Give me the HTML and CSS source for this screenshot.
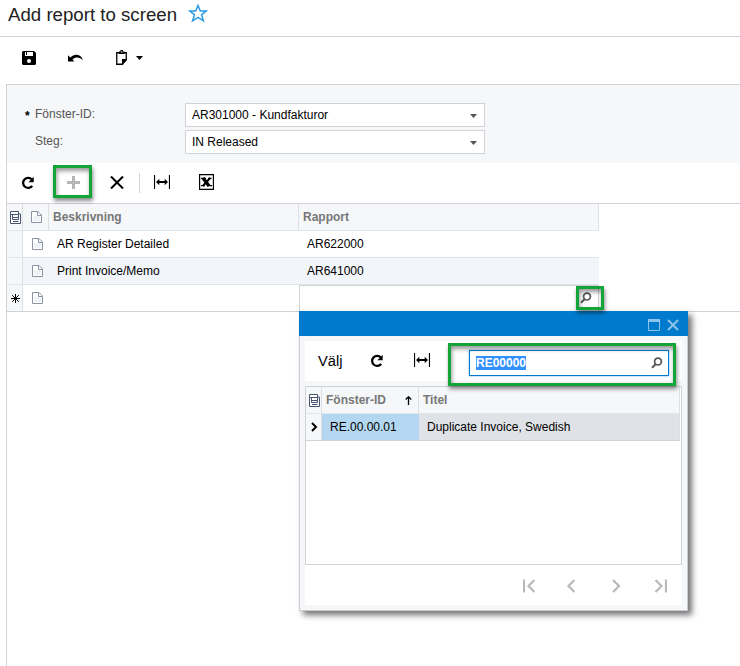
FILE: index.html
```html
<!DOCTYPE html>
<html lang="sv">
<head>
<meta charset="utf-8">
<title>Add report to screen</title>
<link rel="stylesheet" href="styles.css">
</head>
<body>
<svg class="defs" width="0" height="0">
  <defs>
    <symbol id="refresh" viewBox="0 0 14 14"><path d="M10.9 3.6A5 5 0 1 0 11.2 9.800" fill="none" stroke="currentColor" stroke-width="2.200"/><path d="M12.700 .8V6.2H7.4Z" fill="currentColor"/></symbol>
    <symbol id="fit" viewBox="0 0 16 14"><path d="M.5 0V14M15.5 0V14" stroke="currentColor" stroke-width="1.2"/><path d="M4 7H12" stroke="currentColor" stroke-width="2"/><path d="M2 7L5.3 3.7V10.3ZM14 7L10.7 3.7V10.3Z" fill="currentColor"/></symbol>
    <symbol id="file" viewBox="0 0 11 12"><path d="M.5 .5H7L10.500 4V11.500H.5Z" fill="#fff" stroke="#8b93a5"/><path d="M2 5H9V10H2Z" fill="#eff1f5"/><path d="M6.500 .5V4.500H10.500" fill="none" stroke="#8b93a5"/></symbol>
    <symbol id="list" viewBox="0 0 11 13"><path d="M.5 3V12.500H10.500V3Z" fill="#fff" stroke="#46546e"/><path d="M.5 .5H8.500V3.500H.5Z" fill="#fff" stroke="#46546e"/><path d="M2.500 3.500H8.500V6.500H2.500ZM2.500 6.500H8.500V8.500H2.500Z" fill="#fff" stroke="#46546e"/><path d="M3 10.500H8.500" stroke="#46546e"/></symbol>
    <symbol id="search" viewBox="0 0 12 12"><circle cx="7" cy="4.600" r="3.400" fill="none" stroke="#555" stroke-width="1.700"/><path d="M4.500 7.200L1 10.700" stroke="#555" stroke-width="2"/></symbol>
  </defs>
</svg>

<header class="title"><h1>Add report to screen</h1>
  <svg class="star" width="20" height="19" viewBox="0 0 20 19"><path d="M10 1.500L12.300 7H18.200L13.500 10.800L15.400 16.800L10 13.300L4.600 16.800L6.500 10.800L1.800 7H7.700Z" fill="#fff" stroke="#2b9be6" stroke-width="1.500"/></svg>
</header>

<nav class="actions">
  <svg class="save" width="14" height="14" viewBox="0 0 14 14"><path d="M1 0H12L14 2V13L13 14H1L0 13V1Z"/><path d="M3 1H11V5H3Z" fill="#fff"/><path d="M4 0H5V4H4Z"/><circle cx="7" cy="10" r="2" fill="#fff"/></svg>
  <svg class="undo" width="16" height="9" viewBox="0 0 16 9"><path d="M0 1.300V7.500H6.300L4.500 5.300C8 2.700 12 3 14.800 6.200C14 1 7 -1.500 2.400 3.400Z"/></svg>
  <svg class="paste" width="12" height="15" viewBox="0 0 12 15"><path d="M.75 2.750H10.250V9.500L6.500 13.250V14.250H.75Z" fill="#fff" stroke="#000" stroke-width="1.300"/><path d="M3 1.500H4.500V0H7V1.500H8.500V4H3Z"/><path d="M5 1.500H6.500V2.500H5Z" fill="#fff"/><path d="M6 9H11V10L7 14.500H6Z"/></svg>
  <span class="caret black"></span>
</nav>

<main class="page">
  <form class="filters">
    <label class="required">Fönster-ID:</label><div class="select"><span>AR301000 - Kundfakturor</span><i class="caret"></i></div>
    <label>Steg:</label><div class="select"><span>IN Released</span><i class="caret"></i></div>
  </form>

  <div class="tools">
    <svg class="t-refresh" width="14" height="14"><use href="#refresh"/></svg>
    <span class="add"><svg width="13" height="13" viewBox="0 0 13 13"><path d="M6.500 0V13M0 6.500H13" stroke="#b5b5b5" stroke-width="3"/></svg></span>
    <svg class="t-delete" width="14" height="13" viewBox="0 0 14 13"><path d="M1 .5L13 12.500M13 .5L1 12.500" stroke="#000" stroke-width="2"/></svg>
    <i class="divider"></i>
    <svg class="t-fit" width="16" height="14"><use href="#fit"/></svg>
    <svg class="t-excel" width="15" height="16" viewBox="0 0 15 16"><path d="M.6 .6H14.400V15.400H.6Z" fill="#fff" stroke="#000" stroke-width="1.200"/><path d="M4 4L10 12" stroke="#000" stroke-width="3.500"/><path d="M11.200 4L3.800 12" stroke="#000" stroke-width="2"/><path d="M2 4.300H7M9 4.300H12.500M2 11.700H6M8 11.700H13" stroke="#000" stroke-width="1.300"/></svg>
  </div>

  <section class="grid">
    <div class="row head"><span class="mark"><svg width="11" height="13"><use href="#list"/></svg></span><span class="doc"><svg width="11" height="12"><use href="#file"/></svg></span><span class="desc">Beskrivning</span><span class="rep">Rapport</span></div>
    <div class="row"><span class="mark"></span><span class="doc"><svg width="11" height="12"><use href="#file"/></svg></span><span class="desc">AR Register Detailed</span><span class="rep">AR622000</span></div>
    <div class="row alt"><span class="mark"></span><span class="doc"><svg width="11" height="12"><use href="#file"/></svg></span><span class="desc">Print Invoice/Memo</span><span class="rep">AR641000</span></div>
    <div class="row new"><span class="mark"><svg width="9" height="9" viewBox="0 0 9 9"><path d="M4.500 0V9M0 4.500H9M1.200 1.200L7.800 7.800M7.800 1.200L1.200 7.800" stroke="#000" stroke-width="1"/></svg></span><span class="doc"><svg width="11" height="12"><use href="#file"/></svg></span><span class="desc"></span><span class="rep editor"><svg width="12" height="12"><use href="#search"/></svg></span></div>
  </section>
</main>

<aside class="dialog">
  <div class="bar">
    <svg width="12" height="12" viewBox="0 0 12 12"><path d="M.5 1V11.500H11.500V1" fill="none" stroke="#8cc4eb"/><path d="M0 1.500H12" stroke="#8cc4eb" stroke-width="3"/></svg>
    <svg width="12" height="12" viewBox="0 0 12 12"><path d="M1 1L11 11M11 1L1 11" stroke="#8cc4eb" stroke-width="2"/></svg>
  </div>
  <div class="body">
    <div class="lookup-tools">
      <span class="pick">Välj</span>
      <svg class="d-refresh" width="14" height="14"><use href="#refresh"/></svg>
      <svg class="d-fit" width="16" height="14"><use href="#fit"/></svg>
      <div class="query"><mark>RE00000</mark><svg width="12" height="12"><use href="#search"/></svg></div>
    </div>
    <div class="results">
      <div class="line names"><span class="c1"><svg width="11" height="13"><use href="#list"/></svg></span><span class="c2">Fönster-ID<svg width="7" height="9" viewBox="0 0 7 9"><path d="M3.500 1V9M.7 3.500L3.500 .8L6.300 3.500" fill="none" stroke="#000" stroke-width="1.300"/></svg></span><span class="c3">Titel</span></div>
      <div class="line picked"><span class="c1"><svg width="7" height="10" viewBox="0 0 7 10"><path d="M1 1L5 5L1 9" fill="none" stroke="#000" stroke-width="2"/></svg></span><span class="c2">RE.00.00.01</span><span class="c3">Duplicate Invoice, Swedish</span></div>
    </div>
    <div class="pager">
      <svg width="13" height="14" viewBox="0 0 13 14"><path d="M1 .5V13.500M11.500 1L5.500 7L11.500 13" /></svg>
      <svg width="13" height="14" viewBox="0 0 13 14"><path d="M8.500 1L2.500 7L8.500 13"/></svg>
      <svg width="13" height="14" viewBox="0 0 13 14"><path d="M3 1L9 7L3 13"/></svg>
      <svg width="13" height="14" viewBox="0 0 13 14"><path d="M12 .5V13.500M1.500 1L7.500 7L1.500 13"/></svg>
    </div>
  </div>
</aside>
<i class="ring ring-add"></i>
<i class="ring ring-lookup"></i>
<i class="ring ring-query"></i>
</body>
</html>
```
FILE: styles.css
```css
* { box-sizing: border-box; }
body { margin: 0; width: 740px; height: 666px; overflow: hidden; display: flex; flex-direction: column; background: #fff; color: #000; font: 12px/14px "Liberation Sans", Arial, sans-serif; }
svg { display: block; flex: none; }
.defs { position: absolute; }
.title { height: 37px; flex: none; display: flex; padding-left: 8px; border-bottom: 1px solid #d0d2d8; }
h1 { margin: 4px 0 0; font-size: 18.67px; line-height: 22px; font-weight: 400; color: #222; white-space: nowrap; }
.star { margin: 4px 0 0 11px; }
.actions { height: 47px; flex: none; display: flex; align-items: flex-start; padding: 14px 0 0 22px; }
.undo { margin: 3px 0 0 32px; }
.paste { margin: -1px 0 0 32px; }
.caret { width: 7px; height: 4px; flex: none; background: #555; clip-path: polygon(0 0, 100% 0, 50% 100%); }
.caret.black { background: #000; margin: 5px 0 0 8px; }

.page { flex: 1; margin-left: 6px; border: solid #d0d2d8; border-width: 1px 0 0 1px; }
.filters { height: 78px; background: #f5f7f9; display: grid; grid-template-columns: 150px 300px; grid-template-rows: 24px 24px; gap: 3px 0; padding: 18px 0 0 28px; }
label { color: #555; padding-top: 4px; }
label.required::before { content: "*"; color: #000; font-weight: 700; display: inline-block; width: 10px; margin-left: -10px; line-height: 10px; vertical-align: -2px; }
.select { background: #fff; border: 1px solid #d0d2d8; display: flex; align-items: center; justify-content: space-between; padding: 0 7px 0 6px; }
.select .caret { margin-top: 2px; }

.tools { height: 40px; display: flex; align-items: center; padding-left: 14px; }
.add { display: flex; margin: -2px 0 0 32px; }
.t-delete { margin: -1px 0 0 30px; }
.divider { width: 1px; height: 20px; background: #d0d2d8; margin-left: 15px; }
.t-fit { margin-left: 14px; margin-top: -2px; }
.t-excel { margin-left: 29px; margin-top: -2px; }

.grid { border-top: 1px solid #d0d2d8; border-bottom: 1px solid #d0d2d8; }
.row { height: 27px; display: grid; grid-template-columns: 16px 26px 250px 300px; width: 592px; }
.row > span { border-bottom: 1px solid #e2e5ea; display: flex; align-items: center; }
.row > .mark { background: #f5f7f9; border-right: 1px solid #dcdfe5; padding-left: 3px; }
.row .doc { padding-left: 9px; }
.row .desc { padding-left: 8px; }
.row .rep { padding-left: 8px; }
.head > span { background: #f5f7f9; border-right: 1px solid #dcdfe5; font-weight: 700; color: #777; }
.head .doc { padding-left: 8px; }
.head .desc, .head .rep { padding-left: 4px; }
.alt > span { background: #f2f5fa; }
.new { height: 26px; }
.new > span { border-bottom: 0; }
.row.new > .mark { padding-left: 4px; }
.row .editor { border: 1px solid #d0d2d8; border-bottom: 0; justify-content: flex-end; padding: 0 6px 1px 0; }

.dialog { position: absolute; left: 299px; top: 311px; width: 389px; height: 300px; box-shadow: 4px 4px 6px rgba(0,0,0,.55); background: #f5f7f9; }
.bar { height: 25px; background: #007acc; display: flex; align-items: center; justify-content: flex-end; gap: 8px; padding: 3px 9px 0 0; }
.bar svg:first-child { margin-right: -1px; }
.body { height: 275px; border: 1px solid #c9ccd3; border-top: 0; padding: 5px; }
.lookup-tools { height: 40px; background: #fff; display: flex; align-items: center; padding-left: 13px; }
.pick { width: 25px; font-size: 14.67px; line-height: 18px; }
.d-refresh { margin-left: 27px; }
.d-fit { margin: -2px 0 0 30px; }
.query { width: 200px; height: 26px; margin: 4px 0 0 39px; border: 1px solid #007acc; box-shadow: 0 0 2px #66b2e6; display: flex; align-items: center; justify-content: space-between; padding: 0 5px 0 6px; }
.query mark { background: #3390ff; color: #fff; font-weight: 700; }
.results { height: 179px; margin-top: 5px; background: #fff; border: 1px solid #d0d2d8; }
.line { height: 27px; display: grid; grid-template-columns: 16px 97px 261px; }
.line > span { display: flex; align-items: center; border-bottom: 1px solid #e2e5ea; border-right: 1px solid #dcdfe5; }
.names > span { background: #f5f7f9; color: #777; font-weight: 700; padding-left: 4px; }
.names .c2 { justify-content: space-between; padding-right: 6px; }
.line .c1 { background: #f5f7f9; padding-left: 3px; }
.picked > span { padding-left: 8px; border-bottom-color: #d0d2d8; }
.picked > .c1 { padding-left: 5px; }
.picked .c2 { background: #b3d7f0; border-right-color: #b3d7f0; }
.picked .c3 { background: #dfe2e7; }
.pager { height: 40px; background: #fff; display: flex; align-items: center; justify-content: flex-end; gap: 31px; padding: 2px 15px 0 0; }
.pager svg:first-child { margin-right: -1px; }
.pager path { fill: none; stroke: #b9b9b9; stroke-width: 2.2; }

.ring { position: absolute; border: 3px solid #13a538; box-shadow: 1px 3px 4px rgba(0,0,0,.45), inset 1px 3px 4px rgba(0,0,0,.4); }
.ring-add { left: 53px; top: 165px; width: 39px; height: 33px; }
.ring-lookup { left: 576px; top: 286px; width: 28px; height: 24px; }
.ring-query { left: 448px; top: 343px; width: 228px; height: 43px; }
```
